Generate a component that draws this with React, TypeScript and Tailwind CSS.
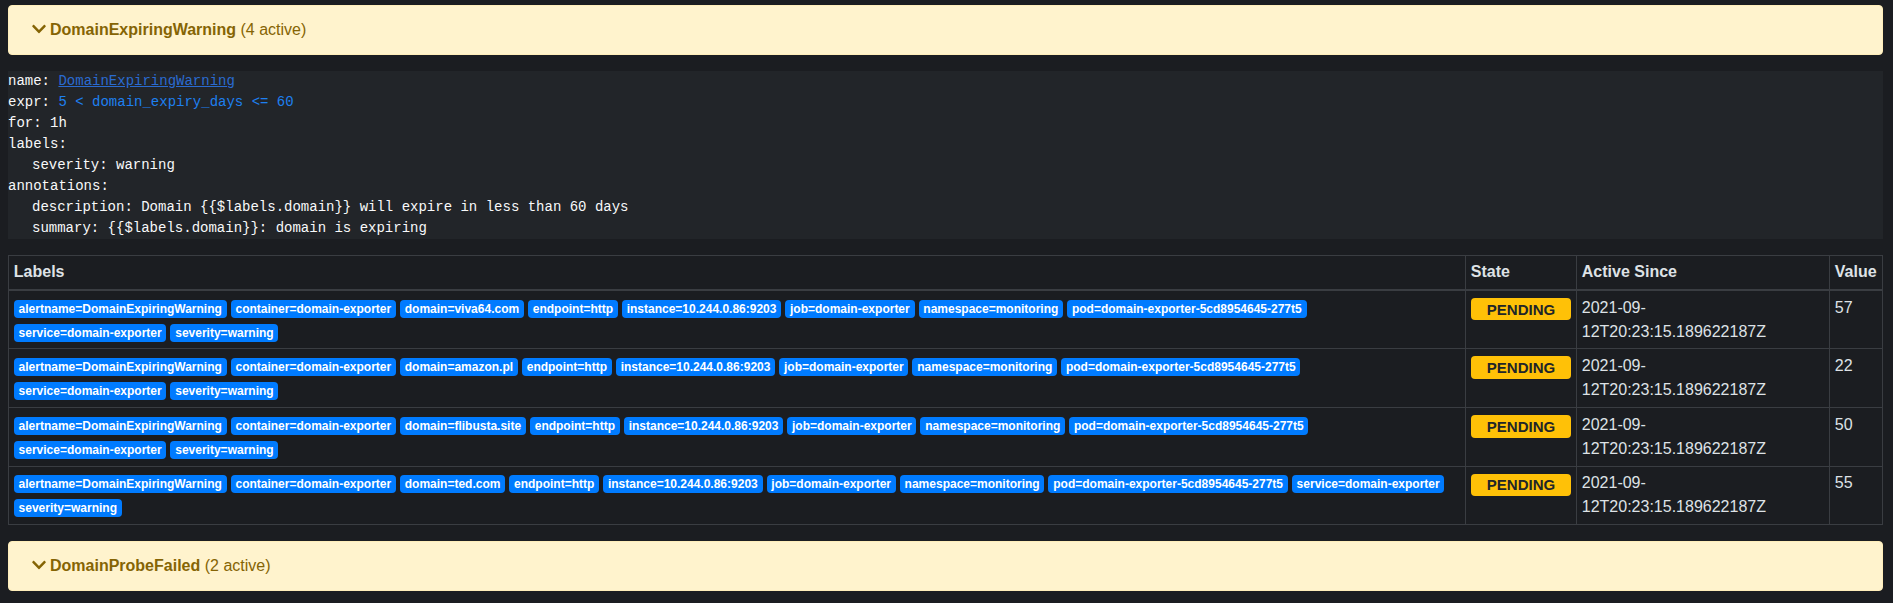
import React from "react";

const ChevronDown = () => (
  <svg
    viewBox="0 0 448 512"
    className="ml-[3px] mr-[4px] inline-block h-4 w-[14px] align-[-0.125em]"
    fill="currentColor"
  >
    <path d="M207.029 381.476L12.686 187.132c-9.373-9.373-9.373-24.569 0-33.941l22.667-22.667c9.357-9.357 24.522-9.375 33.901-.04L224 284.505l154.745-154.021c9.379-9.335 24.544-9.317 33.901.04l22.667 22.667c9.373 9.373 9.373 24.569 0 33.941L240.971 381.476c-9.373 9.372-24.569 9.372-33.942 0z" />
  </svg>
);

const GroupCard = ({ name, count }: { name: string; count: number }) => (
  <div className="mb-4 rounded-[4px] border border-[#ffeeba] bg-[#fff3cd] px-5 py-3 text-[#856404]">
    <ChevronDown />
    <span className="font-bold">{name}</span> ({count} active)
  </div>
);

const rows = [
  { domain: "viva64.com", value: "57" },
  { domain: "amazon.pl", value: "22" },
  { domain: "flibusta.site", value: "50" },
  { domain: "ted.com", value: "55" },
];

const labelsFor = (domain: string) => [
  "alertname=DomainExpiringWarning",
  "container=domain-exporter",
  `domain=${domain}`,
  "endpoint=http",
  "instance=10.244.0.86:9203",
  "job=domain-exporter",
  "namespace=monitoring",
  "pod=domain-exporter-5cd8954645-277t5",
  "service=domain-exporter",
  "severity=warning",
];

const cell = "border border-[#3a3d42] p-[4.8px] align-top";
const head = "border border-b-2 border-[#3a3d42] px-[4.8px] pt-[4.4px] pb-[4.4px] text-left align-bottom font-bold";

export default function App() {
  return (
    <div className="min-h-screen bg-[#1b1d21] pl-2 pr-[10px] pt-[5px] font-['Liberation_Sans',Arial,sans-serif] text-base leading-6 text-[#dee2e6]">
      <GroupCard name="DomainExpiringWarning" count={4} />

      <pre className="mb-4 overflow-hidden bg-[#222529] font-['Liberation_Mono',monospace] text-[14px] leading-[21px] text-[#f8f9fa]">
        <div>
          name:{" "}
          <a className="text-[#2a6bd1] underline" href="#">
            DomainExpiringWarning
          </a>
        </div>
        <div>
          expr: <span className="text-[#1e80f0]">5 &lt; domain_expiry_days &lt;= 60</span>
        </div>
        <div>for: 1h</div>
        <div>
          labels:
          <div className="ml-6">severity: warning</div>
        </div>
        <div>
          annotations:
          <div className="ml-6">
            {"description: Domain {{$labels.domain}} will expire in less than 60 days"}
          </div>
          <div className="ml-6">{"summary: {{$labels.domain}}: domain is expiring"}</div>
        </div>
      </pre>

      <table className="mb-4 w-full table-fixed border-collapse">
        <colgroup>
          <col />
          <col className="w-[111px]" />
          <col className="w-[253px]" />
          <col className="w-[53px]" />
        </colgroup>
        <thead>
          <tr>
            <th className={head}>Labels</th>
            <th className={head}>State</th>
            <th className={head}>Active Since</th>
            <th className={head}>Value</th>
          </tr>
        </thead>
        <tbody>
          {rows.map((r) => (
            <tr key={r.domain}>
              <td className={cell}>
                {labelsFor(r.domain).map((l) => (
                  <span
                    key={l}
                    className="mr-1 inline-block whitespace-nowrap rounded-[4px] bg-[#007bff] px-[4.8px] py-[3px] align-baseline text-[12px] font-bold leading-none text-white"
                  >
                    {l}
                  </span>
                ))}
              </td>
              <td className={cell}>
                <div className="text-[20px] leading-[24px]">
                  <span className="inline-block whitespace-nowrap rounded-[4px] bg-[#ffc107] px-4 py-[3.75px] align-baseline text-[15px] font-bold uppercase leading-none text-[#212529]">
                    pending
                  </span>
                </div>
              </td>
              <td className={cell}>
                2021-09-
                <br />
                12T20:23:15.189622187Z
              </td>
              <td className={cell}>{r.value}</td>
            </tr>
          ))}
        </tbody>
      </table>

      <GroupCard name="DomainProbeFailed" count={2} />
    </div>
  );
}
